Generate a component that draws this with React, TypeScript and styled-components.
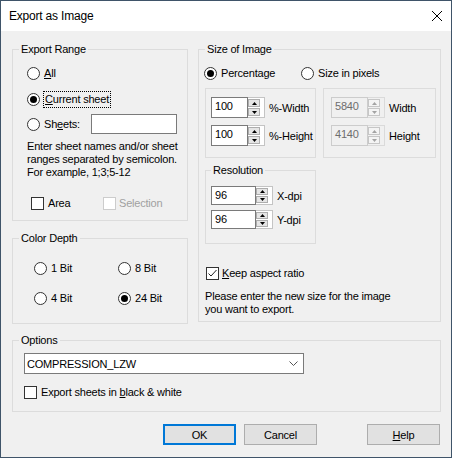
import React from 'react';
import styled, { createGlobalStyle } from 'styled-components';

const GlobalStyle = createGlobalStyle`
  html, body {
    margin: 0;
    padding: 0;
    background: #f0f0f0;
  }
  body {
    font-family: "Liberation Sans", Arial, sans-serif;
    font-size: 11px;
    color: #000;
  }
  * {
    box-sizing: border-box;
  }
`;

const Window = styled.div`
  width: 452px;
  height: 458px;
  border: 1px solid #3f5469;
  background: #f0f0f0;
  display: flex;
  flex-direction: column;
  overflow: hidden;
  letter-spacing: -0.2px;
`;

const TitleBar = styled.div`
  height: 30px;
  flex: none;
  background: #fff;
  display: flex;
  align-items: center;
  justify-content: space-between;
  padding: 0 9px 0 8px;
`;

const Title = styled.span`
  font-size: 12px;
`;

const Content = styled.div`
  padding: 12px 10px 0 11px;
  display: flex;
  flex-direction: column;
`;

const MainGrid = styled.div`
  display: grid;
  grid-template-columns: 176px 243px;
  column-gap: 10px;
  align-items: start;
`;

const Column = styled.div`
  display: flex;
  flex-direction: column;
  gap: 11px;
`;

const Group = styled.fieldset<{ $h: number; $w?: number; $pad?: number; $mt?: number }>`
  margin: ${p => p.$mt ?? 0}px 0 0 0;
  padding: 0 0 0 ${p => p.$pad ?? 6}px;
  border: 1px solid #dcdcdc;
  height: ${p => p.$h}px;
  width: ${p => (p.$w ? `${p.$w}px` : 'auto')};
  min-width: 0;
`;

const Legend = styled.legend`
  padding: 0 2px;
  line-height: 13px;
  font-size: 11px;
`;

const Frame = styled.div<{ $w: number; $inset: number }>`
  width: ${p => p.$w}px;
  height: 70px;
  border: 1px solid #dcdcdc;
  padding: 8px 0 0 ${p => p.$inset}px;
  display: flex;
  flex-direction: column;
  gap: 7px;
`;

/* radio + checkbox */

const OptionLabel = styled.label<{ $w?: number; $disabled?: boolean }>`
  display: flex;
  align-items: center;
  height: 13px;
  flex: none;
  width: ${p => (p.$w ? `${p.$w}px` : 'auto')};
  color: ${p => (p.$disabled ? '#a0a0a0' : '#000')};
  line-height: 13px;
  white-space: nowrap;
`;

const RadioCircle = styled.span<{ $checked?: boolean }>`
  width: 13px;
  height: 13px;
  flex: none;
  border: 1px solid #333;
  border-radius: 50%;
  background: #fff;
  display: flex;
  align-items: center;
  justify-content: center;

  &::after {
    content: '';
    width: 7px;
    height: 7px;
    border-radius: 50%;
    background: #000;
    display: ${p => (p.$checked ? 'block' : 'none')};
  }
`;

const Box = styled.span<{ $disabled?: boolean }>`
  width: 13px;
  height: 13px;
  flex: none;
  border: 1px solid ${p => (p.$disabled ? '#cccccc' : '#333')};
  background: #fff;
  display: flex;
  align-items: center;
  justify-content: center;
`;

const Caption = styled.span<{ $focus?: boolean; $gap?: number }>`
  margin-left: ${p => (p.$focus ? 3 : p.$gap ?? 4)}px;
  padding: ${p => (p.$focus ? '1px 1px' : '0')};
  border: ${p => (p.$focus ? '1px dotted #000' : 'none')};
`;

const Radio: React.FC<{ checked?: boolean; focus?: boolean; w?: number; children: React.ReactNode }> = ({
  checked,
  focus,
  w,
  children,
}) => (
  <OptionLabel $w={w}>
    <RadioCircle $checked={checked} />
    <Caption $focus={focus}>{children}</Caption>
  </OptionLabel>
);

const Check: React.FC<{ checked?: boolean; disabled?: boolean; w?: number; gap?: number; children: React.ReactNode }> = ({
  checked,
  disabled,
  w,
  gap,
  children,
}) => (
  <OptionLabel $w={w} $disabled={disabled}>
    <Box $disabled={disabled}>
      {checked && (
        <svg width="11" height="11" viewBox="0 0 11 11">
          <path d="M1.5 5.5 L4 8 L9.5 2" fill="none" stroke="#222" strokeWidth="1" />
        </svg>
      )}
    </Box>
    <Caption $gap={gap}>{children}</Caption>
  </OptionLabel>
);

/* export range */

const RangeBody = styled.div`
  padding: 11px 0 0 8px;
  display: flex;
  flex-direction: column;
`;

const Line = styled.div<{ $mt?: number; $h?: number }>`
  display: flex;
  align-items: center;
  margin-top: ${p => p.$mt ?? 0}px;
  height: ${p => (p.$h ? `${p.$h}px` : 'auto')};
`;

const TextBox = styled.div<{ $w: number }>`
  width: ${p => p.$w}px;
  height: 20px;
  border: 1px solid #7a7a7a;
  background: #fff;
`;

const Hint = styled.p<{ $mt: number }>`
  margin: ${p => p.$mt}px 0 0 0;
  line-height: 13px;
`;

/* color depth */

const DepthGrid = styled.div`
  padding: 17px 0 0 15px;
  display: grid;
  grid-template-columns: 84px auto;
  row-gap: 17px;
`;

/* size of image */

const SizeBody = styled.div`
  padding-top: 11px;
  display: flex;
  flex-direction: column;
`;

const RadioRow = styled.div`
  display: flex;
  margin-left: -1px;
`;

const FrameRow = styled.div`
  display: flex;
  gap: 7px;
  margin-top: 8px;
`;

const ResBody = styled.div`
  padding-top: 9px;
  display: flex;
  flex-direction: column;
  gap: 5px;
`;

const SpinRow = styled.div<{ $h: number }>`
  display: flex;
  align-items: center;
  height: ${p => p.$h}px;
`;

const Edit = styled.div<{ $w: number; $disabled?: boolean }>`
  width: ${p => p.$w}px;
  height: 100%;
  border: 1px solid ${p => (p.$disabled ? '#cccccc' : '#7a7a7a')};
  background: ${p => (p.$disabled ? '#f0f0f0' : '#fff')};
  color: ${p => (p.$disabled ? '#6d6d6d' : '#000')};
  padding: 2px 0 0 3px;
  line-height: 13px;
`;

const Spinner = styled.div<{ $disabled?: boolean }>`
  width: 17px;
  height: 100%;
  border: 1px solid ${p => (p.$disabled ? '#dadada' : '#c4c4c4')};
  border-left: none;
  background: ${p => (p.$disabled ? '#f0f0f0' : '#fff')};
  padding: 1px 4px 1px 0;
  display: flex;
  flex-direction: column;
  gap: 1px;
`;

const SpinButton = styled.div<{ $disabled?: boolean }>`
  flex: 1;
  border: 1px solid ${p => (p.$disabled ? '#c6c6c6' : '#adadad')};
  background: ${p => (p.$disabled ? '#f4f4f4' : '#e5e5e5')};
  display: flex;
  align-items: center;
  justify-content: center;
`;

const SpinLabel = styled.span`
  margin-left: 4px;
`;

const Arrow: React.FC<{ down?: boolean; disabled?: boolean }> = ({ down, disabled }) => (
  <svg width="5" height="3" viewBox="0 0 5 3">
    <path d={down ? 'M0 0 H5 L2.5 3 Z' : 'M0 3 H5 L2.5 0 Z'} fill={disabled ? '#a3a3a3' : '#000'} />
  </svg>
);

const Spin: React.FC<{ value: string; label: string; w: number; h: number; disabled?: boolean }> = ({
  value,
  label,
  w,
  h,
  disabled,
}) => (
  <SpinRow $h={h}>
    <Edit $w={w} $disabled={disabled}>
      {value}
    </Edit>
    <Spinner $disabled={disabled}>
      <SpinButton $disabled={disabled}>
        <Arrow disabled={disabled} />
      </SpinButton>
      <SpinButton $disabled={disabled}>
        <Arrow down disabled={disabled} />
      </SpinButton>
    </Spinner>
    <SpinLabel>{label}</SpinLabel>
  </SpinRow>
);

/* options */

const OptionsBody = styled.div`
  padding: 6px 0 0 5px;
  display: flex;
  flex-direction: column;
`;

const Combo = styled.div`
  width: 280px;
  height: 21px;
  border: 1px solid #7a7a7a;
  background: #fff;
  display: flex;
  align-items: center;
  justify-content: space-between;
  padding: 0 5px 0 2px;
`;

/* buttons */

const ButtonRow = styled.div`
  display: flex;
  justify-content: flex-end;
  gap: 8px;
  margin-top: 12px;
  padding-right: 1px;
`;

const Button = styled.div<{ $default?: boolean; $ml?: number }>`
  width: 73px;
  height: 21px;
  border: ${p => (p.$default ? '2px solid #0078d7' : '1px solid #adadad')};
  background: #e1e1e1;
  display: flex;
  align-items: center;
  justify-content: center;
  margin-left: ${p => p.$ml ?? 0}px;
`;

export default function App() {
  return (
    <>
      <GlobalStyle />
      <Window>
        <TitleBar>
          <Title>Export as Image</Title>
          <svg width="10" height="10" viewBox="0 0 10 10">
            <path d="M0 0 L10 10 M10 0 L0 10" stroke="#000" strokeWidth="1" />
          </svg>
        </TitleBar>
        <Content>
          <MainGrid>
            <Column>
              <Group $h={178}>
                <Legend>Export Range</Legend>
                <RangeBody>
                  <Line $h={13}>
                    <Radio>
                      <u>A</u>ll
                    </Radio>
                  </Line>
                  <Line $h={13} $mt={13}>
                    <Radio checked focus>
                      <u>C</u>urrent sheet
                    </Radio>
                  </Line>
                  <Line $h={20} $mt={8}>
                    <Radio w={64}>
                      Sh<u>e</u>ets:
                    </Radio>
                    <TextBox $w={86} />
                  </Line>
                  <Hint $mt={6}>
                    Enter sheet names and/or sheet
                    <br />
                    ranges separated by semicolon.
                    <br />
                    For example, 1;3;5-12
                  </Hint>
                  <Line $h={13} $mt={18} style={{ marginLeft: 4 }}>
                    <Check w={72}>Area</Check>
                    <Check disabled gap={3}>
                      Selection
                    </Check>
                  </Line>
                </RangeBody>
              </Group>
              <Group $h={92}>
                <Legend>Color Depth</Legend>
                <DepthGrid>
                  <Radio>1 Bit</Radio>
                  <Radio>8 Bit</Radio>
                  <Radio>4 Bit</Radio>
                  <Radio checked>24 Bit</Radio>
                </DepthGrid>
              </Group>
            </Column>
            <Group $h={279}>
              <Legend>Size of Image</Legend>
              <SizeBody>
                <RadioRow>
                  <Radio checked w={97}>
                    Percentage
                  </Radio>
                  <Radio>Size in pixels</Radio>
                </RadioRow>
                <FrameRow>
                  <Frame $w={111} $inset={5}>
                    <Spin value="100" label="%-Width" w={37} h={21} />
                    <Spin value="100" label="%-Height" w={37} h={21} />
                  </Frame>
                  <Frame $w={113} $inset={7}>
                    <Spin value="5840" label="Width" w={37} h={21} disabled />
                    <Spin value="4140" label="Height" w={37} h={21} disabled />
                  </Frame>
                </FrameRow>
                <Group $h={80} $w={111} $pad={5} $mt={6}>
                  <Legend>Resolution</Legend>
                  <ResBody>
                    <Spin value="96" label="X-dpi" w={45} h={19} />
                    <Spin value="96" label="Y-dpi" w={45} h={19} />
                  </ResBody>
                </Group>
                <Line $h={13} $mt={23} style={{ marginLeft: 1 }}>
                  <Check checked gap={3}>
                    <u>K</u>eep aspect ratio
                  </Check>
                </Line>
                <Hint $mt={10}>
                  Please enter the new size for the image
                  <br />
                  you want to export.
                </Hint>
              </SizeBody>
            </Group>
          </MainGrid>
          <Group $h={78} $mt={10}>
            <Legend>Options</Legend>
            <OptionsBody>
              <Combo>
                <span>COMPRESSION_LZW</span>
                <svg width="9" height="5" viewBox="0 0 9 5">
                  <path d="M0.5 0.5 L4.5 4.5 L8.5 0.5" fill="none" stroke="#555" strokeWidth="1" />
                </svg>
              </Combo>
              <Line $h={13} $mt={12}>
                <Check>
                  Export sheets in <u>b</u>lack &amp; white
                </Check>
              </Line>
            </OptionsBody>
          </Group>
          <ButtonRow>
            <Button $default>OK</Button>
            <Button>Cancel</Button>
            <Button $ml={42}>
              <u>H</u>elp
            </Button>
          </ButtonRow>
        </Content>
      </Window>
    </>
  );
}
